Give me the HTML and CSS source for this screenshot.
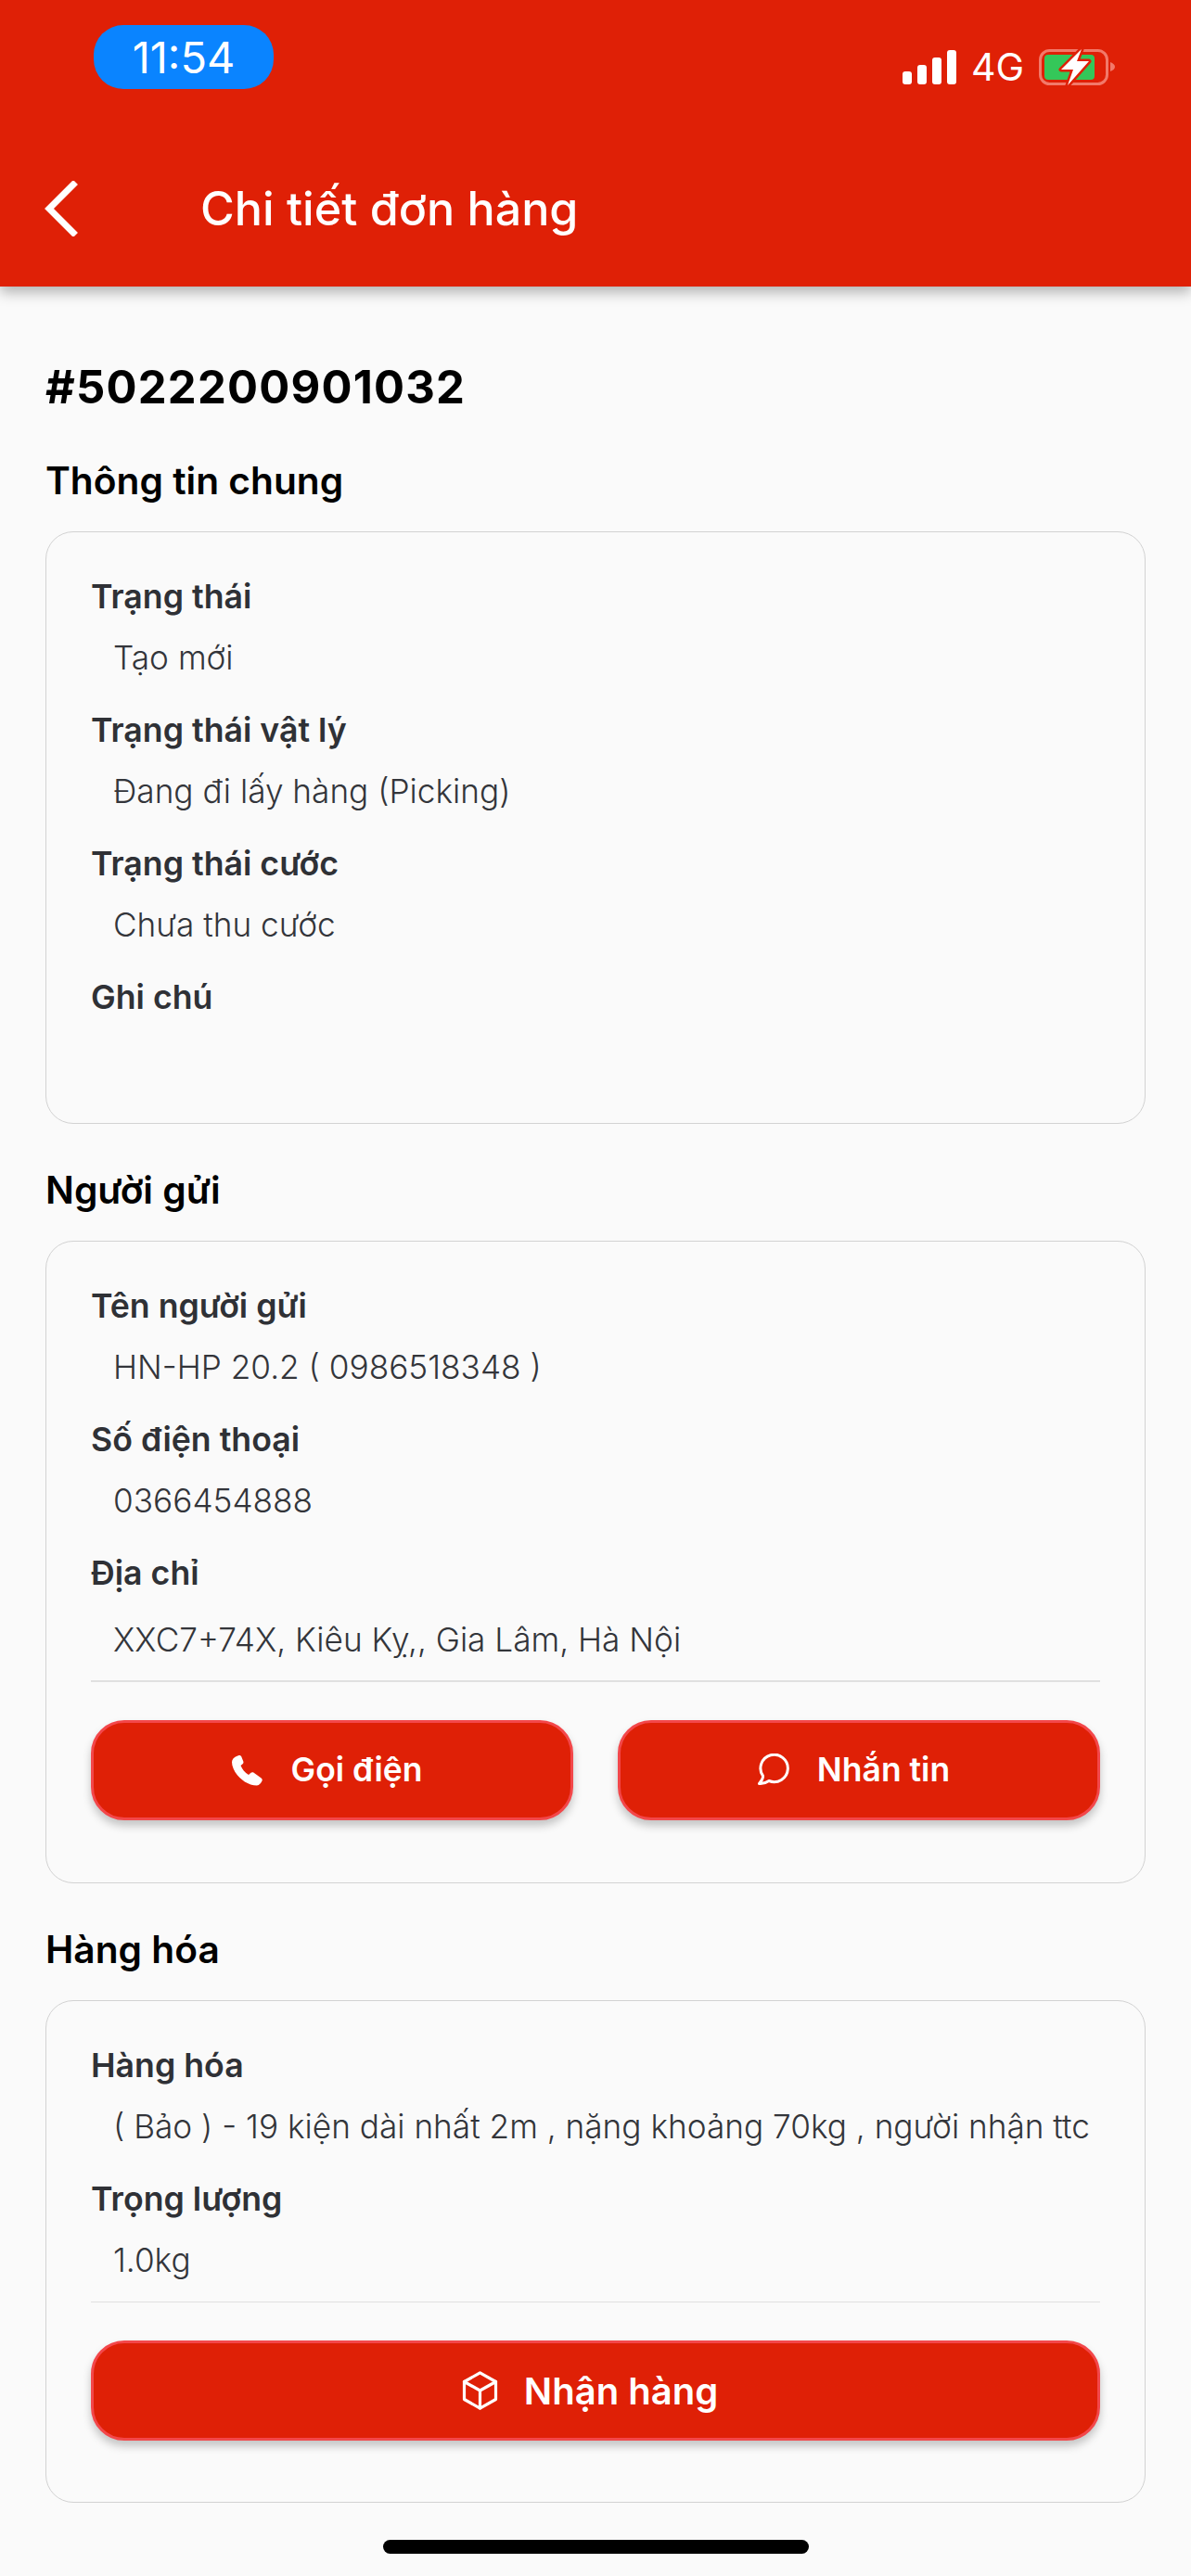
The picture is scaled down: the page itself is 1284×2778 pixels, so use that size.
FILE: index.html
```html
<!DOCTYPE html>
<html lang="vi">
<head>
    <meta charset="UTF-8">
    <meta name="viewport" content="width=device-width, initial-scale=1.0">
    <title>Chi tiết đơn hàng</title>
    <link rel="stylesheet" href="styles.css">
</head>
<body>
    <header class="app-header">
        <div class="status-bar">
            <div class="time-pill">11:54</div>
            <div class="status-icons">
                <svg class="signal-icon" width="58" height="37" viewBox="0 0 58 37" fill="#fff">
                    <rect x="0" y="23" width="10" height="14" rx="3"/>
                    <rect x="16" y="16" width="10" height="21" rx="3"/>
                    <rect x="32" y="8" width="10" height="29" rx="3"/>
                    <rect x="48" y="0" width="10" height="37" rx="3"/>
                </svg>
                <span class="network">4G</span>
                <svg class="battery-icon" width="82" height="44" viewBox="0 0 82 44">
                    <rect x="1.5" y="4.5" width="72" height="36" rx="10" fill="none" stroke="#f2796a" stroke-width="3"/>
                    <path d="M77 17c3 1 5 3 5 5s-2 4-5 5z" fill="#f2796a"/>
                    <rect x="6" y="9" width="54" height="27" rx="4" fill="#34c759"/>
                    <path d="M46 3 24 25h13l-6 17 23-26H41z" fill="#fff" stroke="#df2006" stroke-width="5" stroke-linejoin="round" paint-order="stroke"/>
                </svg>
            </div>
        </div>
        <div class="nav-bar">
            <svg class="back-icon" width="36" height="60" viewBox="0 0 36 60" fill="none" stroke="#fff" stroke-width="7" stroke-linecap="square" stroke-linejoin="miter">
                <path d="M31 4 5 30l26 26"/>
            </svg>
            <h1 class="page-title">Chi tiết đơn hàng</h1>
        </div>
    </header>

    <main class="content">
        <h2 class="order-code">#5022200901032</h2>

        <h3 class="section-title">Thông tin chung</h3>
        <section class="card">
            <div class="field-label">Trạng thái</div>
            <div class="field-value">Tạo mới</div>
            <div class="field-label">Trạng thái vật lý</div>
            <div class="field-value">Đang đi lấy hàng (Picking)</div>
            <div class="field-label">Trạng thái cước</div>
            <div class="field-value">Chưa thu cước</div>
            <div class="field-label">Ghi chú</div>
            <div class="field-value empty"></div>
        </section>

        <h3 class="section-title">Người gửi</h3>
        <section class="card">
            <div class="field-label">Tên người gửi</div>
            <div class="field-value">HN-HP 20.2 ( 0986518348 )</div>
            <div class="field-label">Số điện thoại</div>
            <div class="field-value">0366454888</div>
            <div class="field-label">Địa chỉ</div>
            <div class="field-value tall">XXC7+74X, Kiêu Kỵ,, Gia Lâm, Hà Nội</div>
            <div class="divider"></div>
            <div class="button-row">
                <button class="action-btn">
                    <svg width="36" height="36" viewBox="0 0 36 36" fill="#fff">
                        <path d="M8.500 2C9.700 1.600 10.800 2.300 11.200 3.300L13.300 8.500C13.700 9.500 13.400 10.500 12.600 11.200L10.500 13C12.300 17.300 15 20.500 19 23L21.500 20.800C22.300 20.100 23.400 20 24.300 20.600L32.600 26.400C33.700 27.200 34 28.500 33.500 29.600C32.500 32 30.500 34.500 28 34.500C14 34.500 1 20 1 9.300C1 6 4 3.400 8.500 2Z"/>
                    </svg>
                    <span>Gọi điện</span>
                </button>
                <button class="action-btn">
                    <svg width="36" height="36" viewBox="0 0 36 36" fill="none" stroke="#fff" stroke-width="3" stroke-linejoin="round" stroke-linecap="round">
                        <path d="M13 29.500A14.700 14.700 0 1 0 6.500 24.200Q7 27 2.500 32.500Q8 33 13 29.500Z"/>
                    </svg>
                    <span>Nhắn tin</span>
                </button>
            </div>
        </section>

        <h3 class="section-title">Hàng hóa</h3>
        <section class="card">
            <div class="field-label">Hàng hóa</div>
            <div class="field-value">( Bảo ) - 19 kiện dài nhất 2m , nặng khoảng 70kg , người nhận ttc</div>
            <div class="field-label">Trọng lượng</div>
            <div class="field-value">1.0kg</div>
            <div class="divider"></div>
            <button class="action-btn wide">
                <svg width="40" height="42" viewBox="0 0 40 42" fill="none" stroke="#fff" stroke-width="3.200" stroke-linejoin="round" stroke-linecap="round">
                    <path d="M19.500 1.800 36.500 11.500V30.500L19.500 40.200 2.500 30.500V11.500z"/>
                    <path d="M2.500 11.500l17 9.500 17-9.500M19.500 21v19"/>
                </svg>
                <span>Nhận hàng</span>
            </button>
        </section>
    </main>

    <div class="home-bar"></div>
</body>
</html>
```

FILE: styles.css
```css
* {
    box-sizing: border-box;
}
body {
    margin: 0;
    width: 1284px;
    height: 2778px;
    overflow: hidden;
    background-color: #fafafa;
    font-family: Inter, "Noto Sans", sans-serif;
    color: #000;
}
.app-header {
    height: 309px;
    background-color: #df2006;
    box-shadow: 0 6px 14px rgba(0,0,0,0.3);
    padding-top: 27px;
    color: #fff;
}
.status-bar {
    height: 69px;
    padding-left: 101px;
    padding-right: 82px;
    display: flex;
    justify-content: space-between;
}
.time-pill {
    width: 194px;
    height: 69px;
    border-radius: 32px;
    background-color: #0a84ff;
    text-align: center;
    font-size: 47px;
    line-height: 69px;
}
.status-icons {
    display: flex;
    align-items: center;
    margin-top: 23px;
    height: 44px;
}
.signal-icon {
    margin-right: 16px;
}
.network {
    font-size: 41px;
    line-height: 44px;
    margin-right: 16px;
}
.nav-bar {
    display: flex;
    align-items: center;
    padding-left: 48px;
    margin-top: 99px;
    height: 60px;
}
.page-title {
    margin: 0 0 0 132px;
    font-size: 50.2px;
    font-weight: 500;
    line-height: 60px;
}
.content {
    padding: 0 49px;
}
.order-code {
    margin: 80px 0 0;
    font-size: 49px;
    font-weight: 700;
    line-height: 58px;
    letter-spacing: 1.2px;
}
.section-title {
    margin: 48px 0 0;
    font-size: 40.7px;
    font-weight: 600;
    line-height: 48px;
}
.card + .section-title {
    margin-top: 48px;
}
.card {
    margin-top: 30px;
    padding: 47px 48px;
    border: 1.5px solid #d2d2d2;
    border-radius: 30px;
}
.field-label {
    font-size: 35.7px;
    font-weight: 600;
    line-height: 44px;
    color: #2f3136;
}
.field-value {
    margin-top: 22px;
    margin-bottom: 34px;
    padding-left: 24px;
    min-height: 44px;
    font-size: 35.2px;
    font-weight: 350;
    line-height: 44px;
    color: #33353a;
    white-space: nowrap;
}
.field-value.empty {
    min-height: 0;
    margin: 0;
    height: 67px;
}
.field-value.tall {
    margin-top: 28px;
    margin-bottom: 0;
}
.divider {
    height: 1.5px;
    background-color: #e0e0e0;
}
.field-value + .divider {
    margin-top: -11px;
}
.field-value.tall + .divider {
    margin-top: 22px;
}
.button-row {
    display: flex;
    gap: 48px;
}
.action-btn {
    flex: 1;
    display: flex;
    align-items: center;
    justify-content: center;
    gap: 29px;
    height: 108px;
    margin-top: 41px;
    margin-bottom: 20px;
    padding: 0 12px 0 0;
    border: 3px solid #f3474a;
    border-radius: 36px;
    background-color: #df2006;
    box-shadow: 0 6px 10px rgba(0,0,0,0.22);
    color: #fff;
    font-family: inherit;
    font-size: 35.5px;
    font-weight: 600;
}
.action-btn.wide {
    width: 100%;
    gap: 27px;
    margin-bottom: 19px;
    font-size: 40px;
}
.home-bar {
    position: absolute;
    left: 413px;
    top: 2739px;
    width: 459px;
    height: 15px;
    border-radius: 8px;
    background-color: #000;
}
```
